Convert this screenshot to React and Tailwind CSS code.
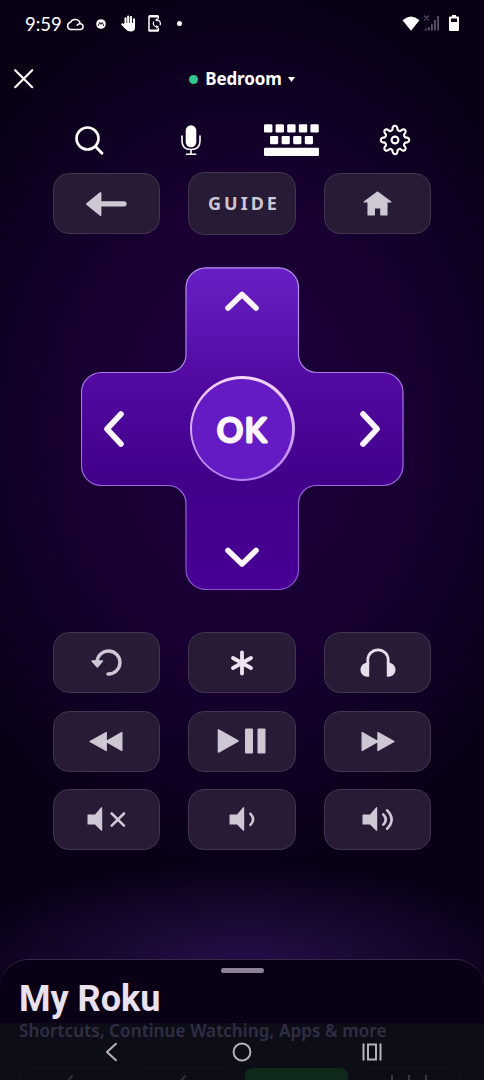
const keys = "flex items-center justify-center rounded-[16px] border-[1.5px] border-[#43354f] bg-[#271b36]";

function Key({ label, children, className = "h-[61px] text-[#cfc7d4]" }) {
  return (
    <button aria-label={label} className={`${keys} ${className}`}>
      {children}
    </button>
  );
}

function Icon({ w, h, children, className = "" }) {
  return (
    <svg
      width={w}
      height={h}
      viewBox={`0 0 ${w} ${h}`}
      fill="currentColor"
      strokeLinecap="round"
      strokeLinejoin="round"
      className={`shrink-0 ${className}`}
    >
      {children}
    </svg>
  );
}

function StatusBar() {
  return (
    <div className="flex h-12 items-center justify-between pr-[25px] pl-[25px]">
      <div className="flex items-center">
        <span className="w-[37px] font-['Lato'] text-[18.5px] leading-6 whitespace-nowrap">9:59</span>
        <Icon w={18} h={14} className="-mt-px ml-1">
          <path
            d="M4.5 12.5H14A2.9 2.9 0 0 0 14.4 6.7Q12.6 6.4 11.2 8.2M14.2 6.5A5.2 5.2 0 0 0 4.5 5.3A3.7 3.7 0 0 0 4.5 12.5"
            fill="none"
            stroke="currentColor"
            strokeWidth="1.5"
          />
        </Icon>
        <Icon w={10} h={10} className="ml-3">
          <circle cx="5" cy="5" r="4.8" />
          <path d="M2.4 6.5L3.7 3.4L5 5.4L6.3 3.4L7.6 6.5" fill="none" stroke="#090016" strokeWidth=".9" />
        </Icon>
        <Icon w={15} h={17} className="-mt-px ml-[15px]">
          <path d="M4.5 10V3.3M7.2 9V1.5M10 9V2M13 10V4.2M1.3 9.3L5 13" fill="none" stroke="currentColor" strokeWidth="2.1" />
          <path d="M3.5 8H14V12.5Q14 16.5 9.8 16.5Q6.5 16.5 4.5 14L1.5 10Z" />
        </Icon>
        <Icon w={14} h={17} className="-mt-px ml-3">
          <path d="M10.3 3.3V1.5Q10.3 .8 9.5 .8H1.8Q1 .8 1 1.6V15.3Q1 16.1 1.8 16.1H9.5Q10.3 16.1 10.3 15.3V13.5" fill="none" stroke="currentColor" strokeWidth="1.5" />
          <path d="M1 1H10V2.6H1ZM1 14.4H10V16H1Z" />
          <path d="M8.5 4.8A3.7 3.7 0 0 1 12.2 9.8M9.2 12A3.7 3.7 0 0 1 5.5 7" fill="none" stroke="currentColor" strokeWidth="1.2" />
          <path d="M9.5 3V6.8L7 4.9ZM8.3 10V13.7L10.8 11.8Z" />
        </Icon>
        <span className="-mt-px ml-[15px] size-[5px] rounded-full bg-white" />
      </div>
      <div className="-mt-[2px] flex items-center">
        <Icon w={18} h={15}>
          <path d="M0.5 4.2Q9 -3.2 17.5 4.2L9 14.8Z" />
        </Icon>
        <Icon w={16} h={16} className="ml-1 text-[#5a5165]">
          <path d="M.5 1L4.5 5M4.5 1L.5 5" stroke="currentColor" strokeWidth="1.1" />
          <path d="M0 15.5L3 12.7V15.5ZM4 12H5.8V15.5H4ZM7 9H8.8V15.5H7ZM10 5H11.8V15.5H10ZM13.2 1H15V15.5H13.2Z" />
        </Icon>
        <Icon w={10} h={16} className="ml-[9px]">
          <path fillRule="evenodd" d="M3 0H7V1.5H9Q10 1.5 10 2.5V15Q10 16 9 16H1Q0 16 0 15V2.5Q0 1.5 1 1.5H3ZM2 3.5V7H8V3.5Z" />
        </Icon>
      </div>
    </div>
  );
}

function Header() {
  return (
    <header className="grid h-[62px] grid-cols-[1fr_auto_1fr] items-center px-[14px]">
      <button aria-label="Close">
        <Icon w={20} h={20}>
          <path d="M1.2 1.2L18.2 18.2M18.2 1.2L1.2 18.2" stroke="currentColor" strokeWidth="2.1" />
        </Icon>
      </button>
      <div className="flex items-center">
        <span className="size-[9px] rounded-full bg-[#2fc98b]" />
        <span className="ml-[7px] text-[17px] leading-6 font-bold tracking-[-0.1px]">Bedroom</span>
        <Icon w={7} h={5} className="ml-[6px]">
          <path d="M0 0H7L3.5 5Z" />
        </Icon>
      </div>
    </header>
  );
}

function Toolbar() {
  return (
    <div className="mb-[2px] flex h-[60px] items-center justify-between pr-[73px] pl-[75px]">
      <button aria-label="Search">
        <Icon w={29} h={29}>
          <circle cx="12.5" cy="12.5" r="11" fill="none" stroke="currentColor" strokeWidth="2.6" />
          <path d="M20.5 20.5L27 27.3" stroke="currentColor" strokeWidth="2.8" />
        </Icon>
      </button>
      <button aria-label="Voice" className="ml-[17px]">
        <Icon w={20} h={31}>
          <rect x="4.7" y="0.3" width="10.6" height="22" rx="5.3" />
          <path d="M1 11V16Q1 24.5 10 24.5Q19 24.5 19 16V11M10 25V29.3M5.5 29.3H14.7" fill="none" stroke="currentColor" strokeWidth="1.6" />
        </Icon>
      </button>
      <button aria-label="Keyboard" className="ml-[3px]">
        <Icon w={55} h={32}>
          {[0, 11.6, 23.2, 34.8, 46.4].map((x) => (
            <rect key={x} x={x} y="0.3" width="8.4" height="8.2" rx="1.2" />
          ))}
          {[6, 17.6, 29.2, 40.8].map((x) => (
            <rect key={x} x={x} y="12" width="8.2" height="8.2" rx="1.2" />
          ))}
          <rect y="23.7" width="55" height="8.2" rx="1.2" />
        </Icon>
      </button>
      <button aria-label="Settings">
        <svg width="32" height="32" viewBox="-16 -16 32 32" fill="none" stroke="currentColor" strokeWidth="2.1" strokeLinejoin="round">
          <path d="M-2.6 -10.2C-2.6 -15.6 2.6 -15.6 2.6 -10.2Q4 -8.6 5.4 -9C9.2 -12.9 12.9 -9.2 9 -5.4Q8.6 -4 10.2 -2.6C15.6 -2.6 15.6 2.6 10.2 2.6Q8.6 4 9 5.4C12.9 9.2 9.2 12.9 5.4 9Q4 8.6 2.6 10.2C2.6 15.6 -2.6 15.6 -2.6 10.2Q-4 8.6 -5.4 9C-9.2 12.9 -12.9 9.2 -9 5.4Q-8.6 4 -10.2 2.6C-15.6 2.6 -15.6 -2.6 -10.2 -2.6Q-8.6 -4 -9 -5.4C-12.9 -9.2 -9.2 -12.9 -5.4 -9Q-4 -8.6 -2.6 -10.2Z" />
          <circle r="3.4" />
        </svg>
      </button>
    </div>
  );
}

function Chevron({ label, points, className }) {
  return (
    <button aria-label={label} className={`flex items-center justify-center ${className}`}>
      <svg width="36" height="36" viewBox="-18 -18 36 36" fill="none" stroke="#fcf5ff" strokeWidth="5.6" strokeLinecap="round" strokeLinejoin="round">
        <polyline points={points} />
      </svg>
    </button>
  );
}

function DPad() {
  return (
    <div className="relative mx-auto mt-8 h-[323px] w-[323px]">
      <svg width="323" height="323" viewBox="0 0 323 323" className="absolute inset-0">
        <defs>
          <linearGradient id="pad" x1="0" y1="0" x2="0" y2="1">
            <stop offset="0" stopColor="#6820c6" />
            <stop offset="0.36" stopColor="#5109a0" />
            <stop offset="0.65" stopColor="#42008a" />
            <stop offset="1" stopColor="#480093" />
          </linearGradient>
          <linearGradient id="edge" x1="0" y1="0" x2="0" y2="1">
            <stop offset="0" stopColor="#b892ef" />
            <stop offset="1" stopColor="#8951cd" />
          </linearGradient>
        </defs>
        <path
          d="M125 .8H197.5A20 20 0 0 1 217.5 20.8V87.5A18 18 0 0 0 235.5 105.5H302A20 20 0 0 1 322 125.5V198.5A20 20 0 0 1 302 218.5H235.5A18 18 0 0 0 217.5 236.5V302.5A20 20 0 0 1 197.5 322.5H125A20 20 0 0 1 105 302.5V236.5A18 18 0 0 0 87 218.5H20.5A20 20 0 0 1 .5 198.5V125.5A20 20 0 0 1 20.5 105.5H87A18 18 0 0 0 105 87.5V20.8A20 20 0 0 1 125 .8Z"
          fill="url(#pad)"
          stroke="url(#edge)"
          strokeWidth="1.2"
        />
      </svg>
      <div className="relative grid h-full grid-cols-[105px_113px_105px] grid-rows-[105px_113px_105px]">
        <Chevron label="Up" points="-14,7 0,-6.5 14,7" className="col-start-2 mb-[38px]" />
        <Chevron label="Left" points="7,-15 -7,0 7,15" className="col-start-1 row-start-2 mr-[38px]" />
        <button className="col-start-2 row-start-2 flex size-[105px] items-center justify-center place-self-center rounded-full bg-gradient-to-b from-[#f5d5fa] to-[#b47df2] p-[2.5px]">
          <span className="flex size-full items-center justify-center rounded-full bg-[#651bc4]">
            <svg width="60" height="40" className="overflow-visible font-['Lato'] text-[32.5px]">
              <text x="5 32.8" y="33" fill="#fcf5ff" stroke="#fcf5ff" strokeWidth="3" strokeLinejoin="round">
                OK
              </text>
            </svg>
          </span>
        </button>
        <Chevron label="Right" points="-7,-15 7,0 -7,15" className="col-start-3 row-start-2 ml-[38px]" />
        <Chevron label="Down" points="-14,-6.5 0,7 14,-6.5" className="col-start-2 row-start-3 mt-[38px]" />
      </div>
    </div>
  );
}

const speaker = "M1 8.5H8L14 1.5Q15.2 .5 15.2 2V24Q15.2 25.6 14 24.5L8 18.5H1Q.5 18.5 .5 18V9Q.5 8.5 1 8.5Z";

function Keypad() {
  return (
    <div className="mt-[42px] grid grid-cols-3 gap-x-7 gap-y-[17.5px] px-[52.5px]">
      <Key label="Replay">
        <Icon w={32} h={28} className="ml-[2px]">
          <path d="M17 25A11.5 11.5 0 1 0 6 12.5" fill="none" stroke="currentColor" strokeWidth="3.4" />
          <path d="M1 12H11.5L6.4 18Z" stroke="currentColor" strokeWidth="1.4" />
        </Icon>
      </Key>
      <Key label="Options" className="h-[61px] text-[#eee5f2]">
        <Icon w={24} h={26}>
          <path d="M12 2.5V23.5M3 8L21 18M21 8L3 18" stroke="currentColor" strokeWidth="3.8" />
        </Icon>
      </Key>
      <Key label="Headphones" className="h-[61px] text-[#e6deea]">
        <Icon w={36} h={30}>
          <path d="M7.8 17V12A10.2 10.2 0 0 1 28.2 12V17" fill="none" stroke="currentColor" strokeWidth="2.7" />
          <path d="M9.2 14V28.5C4 29.5 .5 26 .5 21.8C.5 17.5 3.5 14.8 9.2 14ZM26.8 14V28.5C32 29.5 35.5 26 35.5 21.8C35.5 17.5 32.5 14.8 26.8 14Z" />
        </Icon>
      </Key>
      <Key label="Rewind">
        <Icon w={34} h={21}>
          <path d="M17.2 1.5V19.5L1 10.5ZM32.8 1.5V19.5L17 10.5Z" stroke="currentColor" strokeWidth="1.4" />
        </Icon>
      </Key>
      <Key label="Play or pause">
        <Icon w={49} h={26}>
          <path d="M1.5 2V24L21 13Z" stroke="currentColor" strokeWidth="1.6" />
          <rect x="28" y=".5" width="8" height="25" rx="1" />
          <rect x="40.5" y=".5" width="8" height="25" rx="1" />
        </Icon>
      </Key>
      <Key label="Fast forward">
        <Icon w={34} h={21}>
          <path d="M1.2 1.5V19.5L17 10.5ZM17 1.5V19.5L33 10.5Z" stroke="currentColor" strokeWidth="1.4" />
        </Icon>
      </Key>
      <Key label="Mute">
        <Icon w={39} h={26} className="-mt-[2px]">
          <path d={speaker} />
          <path d="M24.7 7.5L37 19.7M37 7.5L24.7 19.7" stroke="currentColor" strokeWidth="2.6" />
        </Icon>
      </Key>
      <Key label="Volume down">
        <Icon w={27} h={26} className="-mt-[2px] ml-[2px]">
          <path d={speaker} />
          <path d="M21.5 7.8Q26.8 13.3 21.5 18.8" fill="none" stroke="currentColor" strokeWidth="2.6" />
        </Icon>
      </Key>
      <Key label="Volume up">
        <Icon w={32} h={26} className="-mt-[2px]">
          <path d={speaker} />
          <path d="M21.3 8.4Q26.2 13.5 21.3 18.6M25.2 4.3Q34 13.5 25.2 22.7" fill="none" stroke="currentColor" strokeWidth="2.6" />
        </Icon>
      </Key>
    </div>
  );
}

function SystemNav() {
  return (
    <nav className="absolute inset-x-0 bottom-0 flex h-[57px] justify-between bg-[#0e1018]/80 pt-[19px] pr-[102px] pl-[105px] text-[#b5b2bb]">
      <Icon w={13} h={20}>
        <path d="M11 1.8L2 10L11 18.2" fill="none" stroke="currentColor" strokeWidth="2" />
      </Icon>
      <Icon w={20} h={20} className="ml-[3px]">
        <circle cx="10" cy="10" r="8.4" fill="none" stroke="currentColor" strokeWidth="2" />
      </Icon>
      <svg width="20" height="20" viewBox="0 0 20 20" fill="none" stroke="currentColor" strokeWidth="2">
        <path d="M1.5 1.5V18.5M18.5 1.5V18.5M6 2.5H14V17.5H6Z" />
      </svg>
    </nav>
  );
}

function Sheet() {
  return (
    <section className="relative mt-[109px] h-[121px] overflow-hidden rounded-t-[28px] border-t border-[#382746] bg-[#090016]">
      <div className="mx-auto mt-[8px] h-[5px] w-[43px] rounded-full bg-[#8e8396]" />
      <h1 className="mt-[6px] ml-[19px] font-['Roboto'] text-[36px] leading-[40px] font-bold text-[#e9e1ed]">My Roku</h1>
      <p className="ml-[19px] text-[17px] leading-6 font-semibold tracking-[0.12px] whitespace-nowrap text-[#b7a4ea]">
        Shortcuts, Continue Watching, Apps &amp; more
      </p>
      <div className="mt-[25px] grid w-[574px] grid-cols-5 gap-[10px] pl-[19px]">
        <div className="h-10 rounded-[10px] border border-[#2c2040] pt-[5px] pl-[47px]">
          <Icon w={6} h={8} className="text-[#c9c0d8]">
            <path d="M1 7L5 2" stroke="currentColor" strokeWidth="2" />
          </Icon>
        </div>
        <div className="h-10 rounded-[10px] border border-[#2c2040] pt-[5px] pl-[47px]">
          <Icon w={6} h={8} className="text-[#c9c0d8]">
            <path d="M1 7L5 2" stroke="currentColor" strokeWidth="2" />
          </Icon>
        </div>
        <div className="h-10 rounded-[8px] bg-[#189025]" />
        <div className="flex h-10 gap-[15px] rounded-[10px] border border-[#2c2040] pt-[6px] pl-[32px]">
          <span className="h-4 w-[2px] bg-[#e0d6ed]" />
          <span className="h-4 w-[2px] bg-[#e0d6ed]" />
          <span className="h-4 w-[2px] bg-[#e0d6ed]" />
        </div>
        <div className="h-10 rounded-[10px] border border-[#2c2040]" />
      </div>
      <SystemNav />
    </section>
  );
}

export default function App() {
  return (
    <main className="h-[1080px] w-[484px] overflow-hidden bg-[#090016] bg-[radial-gradient(ellipse_290px_100px_at_50%_965px,#270f4a_0%,transparent_100%),radial-gradient(ellipse_330px_440px_at_50%_430px,#1b003a_0%,#180033_50%,transparent_100%)] font-['Noto_Sans',sans-serif] text-white">
      <StatusBar />
      <Header />
      <Toolbar />
      <div className="grid grid-cols-3 items-center gap-x-7 px-[52.5px]">
        <Key label="Back">
          <Icon w={41} h={26}>
            <path d="M15 12.8H38" stroke="currentColor" strokeWidth="5.2" />
            <path d="M1 13L14.5 2V24Z" stroke="currentColor" strokeWidth="1.8" />
          </Icon>
        </Key>
        <Key label="Guide" className="h-[63px] pl-[4px] font-['Noto_Sans'] text-[18px] font-bold tracking-[3px] text-[#cfc7d4]">
          GUIDE
        </Key>
        <Key label="Home">
          <Icon w={29} h={25}>
            <path d="M14.5 1L28 11H24V24H17.8V17H11.4V24H5V11H1Z" stroke="currentColor" strokeWidth="1.1" />
          </Icon>
        </Key>
      </div>
      <DPad />
      <Keypad />
      <Sheet />
    </main>
  );
}
